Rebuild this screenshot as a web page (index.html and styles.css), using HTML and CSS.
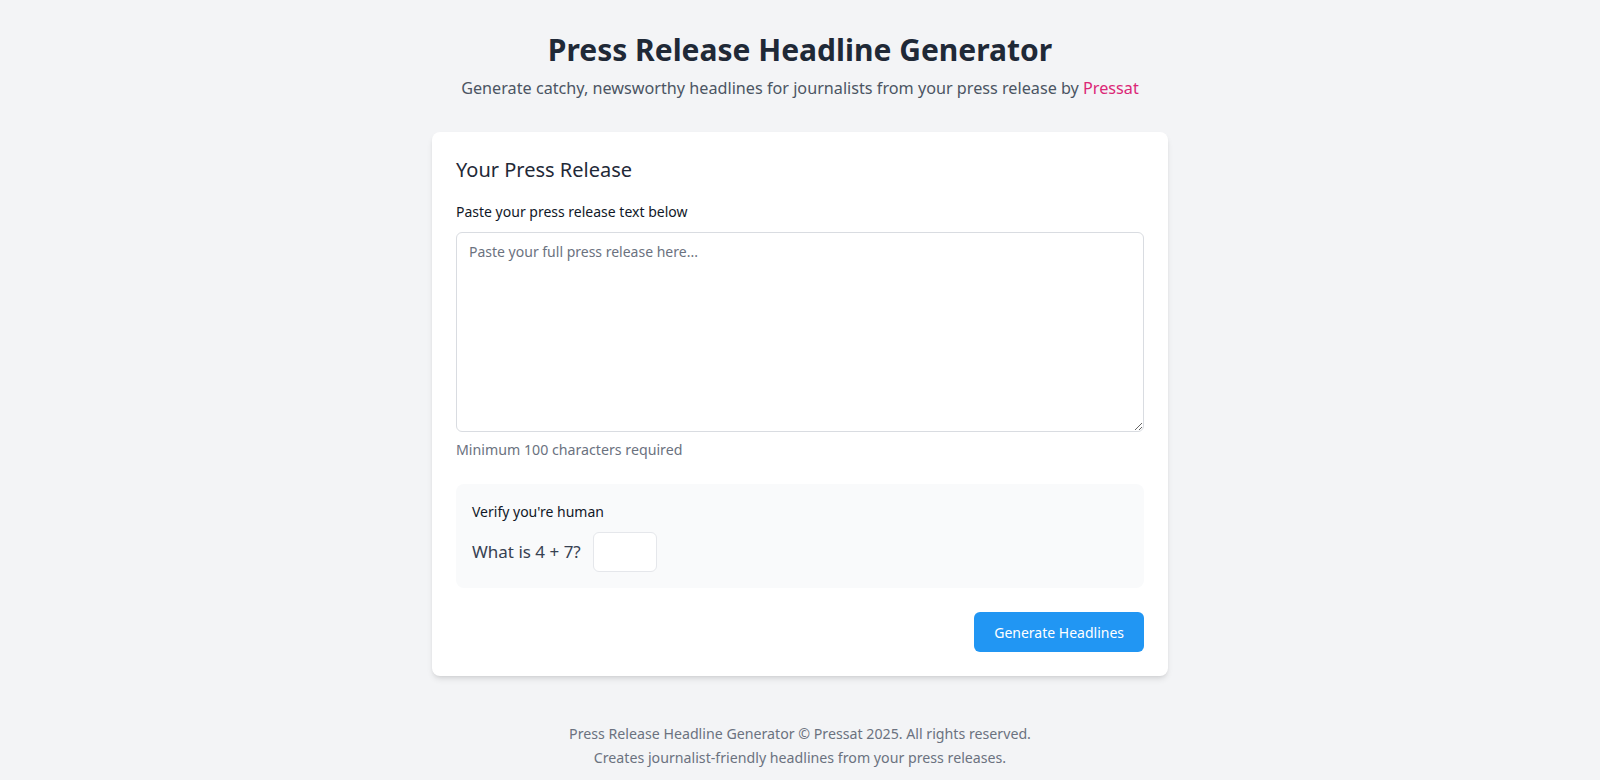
FILE: index.html
```html
<!DOCTYPE html>
<html lang="en">
<head>
    <meta charset="UTF-8">
    <meta name="viewport" content="width=device-width, initial-scale=1.0">
    <title>Press Release Headline Generator</title>
    <link rel="stylesheet" href="styles.css">
</head>
<body>

    <div class="container">
        <header class="page-header">
            <h1>Press Release Headline Generator</h1>
            <p class="tagline">Generate catchy, newsworthy headlines for journalists from your press release by <a href="#" class="brand">Pressat</a></p>
        </header>

        <form class="card" onsubmit="return false;">
            <h2>Your Press Release</h2>
            <label for="releaseText" class="field-label">Paste your press release text below</label>
            <textarea id="releaseText" placeholder="Paste your full press release here..."></textarea>
            <p class="hint">Minimum 100 characters required</p>

            <div class="captcha">
                <p class="captcha-title">Verify you're human</p>
                <div class="captcha-row">
                    <span class="question">What is 4 + 7?</span>
                    <input type="text" id="captchaAnswer" class="captcha-input">
                </div>
            </div>

            <div class="actions">
                <button type="submit" class="btn">Generate Headlines</button>
            </div>
        </form>

        <footer class="page-footer">
            <p>Press Release Headline Generator © Pressat 2025. All rights reserved.</p>
            <p>Creates journalist-friendly headlines from your press releases.</p>
        </footer>
    </div>

</body>
</html>
```

FILE: styles.css
```css
body { margin: 0; padding: 0; background-color: #f3f4f6; font-family: "Noto Sans", "Open Sans", sans-serif; color: #1f2937; }
.container { max-width: 736px; margin: 0 auto; padding: 32px 16px 16px; }

.page-header { text-align: center; margin-bottom: 32px; }
.page-header h1 { margin: 0 0 8px; font-size: 30px; line-height: 36px; font-weight: 700; color: #1f2937; }
.tagline { margin: 0; font-size: 16.2px; line-height: 24px; color: #4b5563; }
.brand { color: #db2777; text-decoration: none; }

.card { background-color: #fff; border-radius: 8px; padding: 24px; box-shadow: 0 4px 6px -1px rgba(0,0,0,0.1), 0 2px 4px -2px rgba(0,0,0,0.1); }
.card h2 { margin: 0 0 16px; font-size: 20px; line-height: 28px; font-weight: 400; color: #1f2937; }
.field-label { display: block; font-size: 14px; line-height: 24px; color: #111827; margin-bottom: 8px; }
textarea { display: block; width: 100%; height: 200px; box-sizing: border-box; padding: 7px 12px 8px; border: 1px solid #d9dce1; border-radius: 6px; font-family: inherit; font-size: 14px; line-height: 24px; color: #1f2937; resize: vertical; }
textarea::placeholder { color: #6b7280; }
.hint { margin: 8px 0 24px; font-size: 14.2px; line-height: 20px; color: #6b7280; }

.captcha { background-color: #f9fafb; border-radius: 8px; padding: 16px; }
.captcha-title { margin: 0 0 8px; font-size: 14px; line-height: 24px; color: #111827; }
.captcha-row { display: flex; align-items: center; gap: 12px; }
.question { font-size: 17px; line-height: 24px; color: #374151; }
.captcha-input { width: 64px; height: 40px; box-sizing: border-box; border: 1px solid #e5e7eb; border-radius: 6px; background: #fff; padding: 0 8px; font-family: inherit; font-size: 16px; }

.actions { display: flex; justify-content: flex-end; margin-top: 24px; }
.btn { height: 40px; padding: 0 20px; border: none; border-radius: 6px; background-color: #2196f3; color: #fff; font-family: inherit; font-size: 14px; cursor: pointer; }

.page-footer { text-align: center; margin-top: 46px; }
.page-footer p { margin: 0; font-size: 14.2px; line-height: 24px; color: #6b7280; }
```
